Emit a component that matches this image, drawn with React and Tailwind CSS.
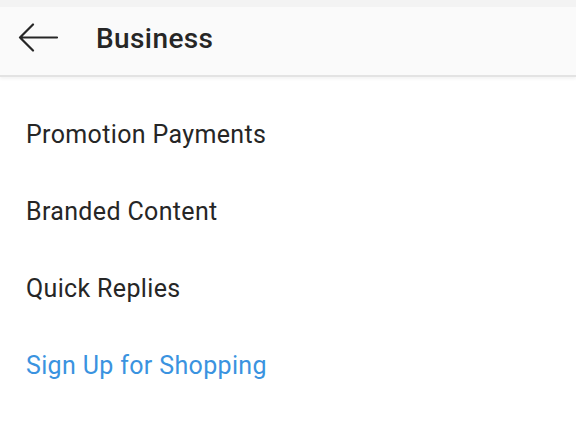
export default function App() {
  const items = ['Promotion Payments', 'Branded Content', 'Quick Replies']

  return (
    <div className="w-[576px] h-[426px] bg-white overflow-hidden font-['Roboto','Liberation_Sans',sans-serif] text-[#262626]">
      <div className="relative bg-[#fafafa] border-b-2 border-[#e3e3e3] shadow-[0_2px_3px_rgba(0,0,0,0.05)]">
        <div className="h-[7px] bg-[#f3f3f3]" />
        <div className="h-[68px] flex items-center">
          <svg className="ml-[17px] mt-[-7px]" width="42" height="30" viewBox="0 0 42 30" fill="none">
            <path d="M40 14.5H3M16 1.5L3 14.5L16 27.5" stroke="#262626" strokeWidth="2.2" strokeLinecap="round" strokeLinejoin="round" />
          </svg>
          <h1 className="ml-[37px] mt-[-5px] text-[28px] font-medium leading-none tracking-[0.4px]">Business</h1>
        </div>
      </div>
      <div className="pt-[19px] pl-[26px]">
        {items.map(t => (
          <div key={t} className="h-[77px] leading-[77px] text-[25px] tracking-[0.35px]">{t}</div>
        ))}
        <div className="h-[77px] leading-[77px] text-[25px] tracking-[0.35px] text-[#3a93e0]">Sign Up for Shopping</div>
      </div>
    </div>
  )
}
